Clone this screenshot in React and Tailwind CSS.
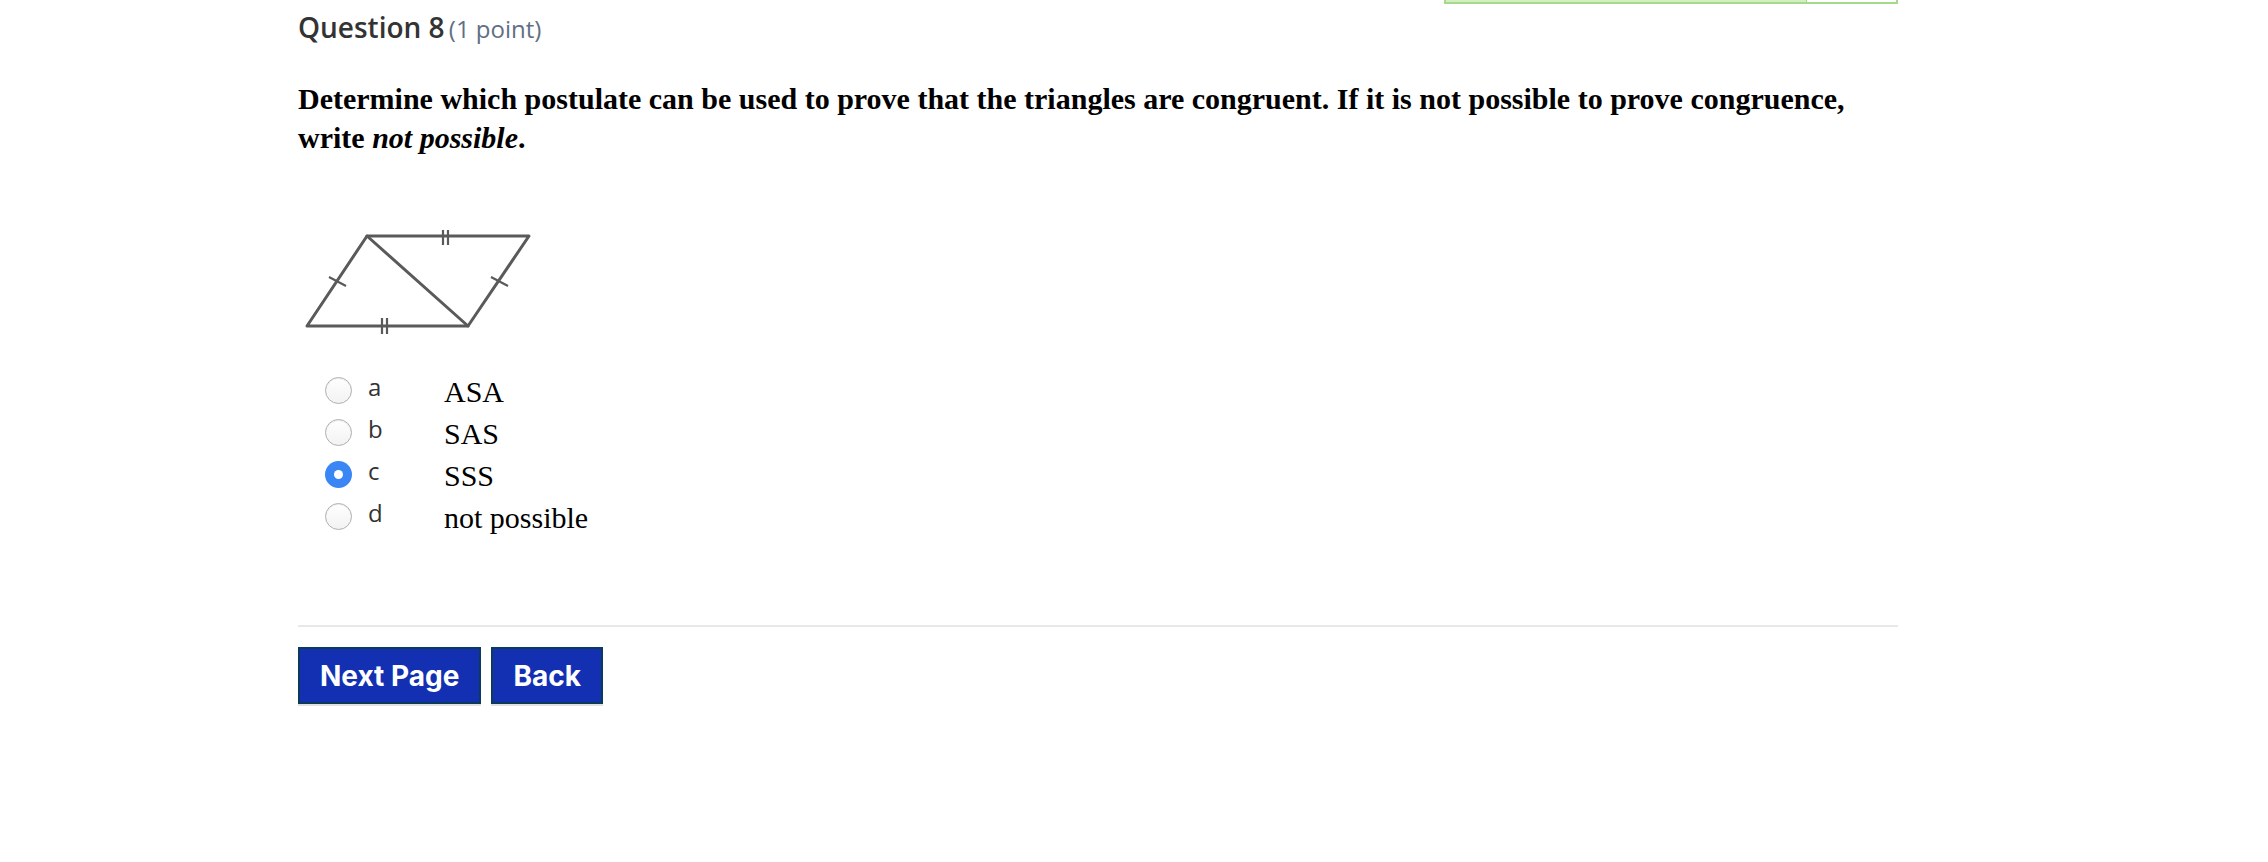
import React from "react";

function Radio({ checked }) {
  if (checked) {
    return (
      <span className="w-[27px] h-[27px] rounded-full bg-[#3a86f5] flex items-center justify-center">
        <span className="w-[9px] h-[9px] rounded-full bg-white" />
      </span>
    );
  }
  return (
    <span className="w-[27px] h-[27px] rounded-full border border-[#b0b0b0] bg-gradient-to-b from-white to-[#f2f2f2] shadow-[inset_0_1px_1px_rgba(0,0,0,0.08)]" />
  );
}

function Figure() {
  return (
    <svg width="240" height="104" viewBox="0 0 240 104" className="block">
      <g stroke="#5a5a5a" strokeWidth="3" fill="none" strokeLinejoin="round" strokeLinecap="round">
        <path d="M69 6 L231 6 L170 96 L9 96 Z" />
        <path d="M69 6 L170 96" />
      </g>
      <g stroke="#5a5a5a" strokeWidth="2.2" fill="none">
        <path d="M145 -3 L145 15 M150 -3 L150 15" />
        <path d="M84 88 L84 104 M89 88 L89 104" />
        <path d="M31 47 L48 56" />
        <path d="M193 47 L210 56" />
      </g>
    </svg>
  );
}

const options = [
  { k: "a", t: "ASA" },
  { k: "b", t: "SAS" },
  { k: "c", t: "SSS", checked: true },
  { k: "d", t: "not possible" },
];

export default function App() {
  return (
    <div className="w-[2268px] h-[862px] bg-white overflow-hidden">
      <div className="ml-[298px] w-[1600px]">
        <div className="flex justify-end">
          <div className="w-[454px] h-[4px] flex border-2 border-t-0 border-[#a5da8e]">
            <div className="flex-1 bg-[#d3efc2] border-r border-[#a5da8e]" />
            <div className="w-[89px] bg-white" />
          </div>
        </div>
        <div className="mt-[4px] leading-[38px] text-[#333]" style={{ fontFamily: '"Open Sans", sans-serif' }}>
          <span className="text-[28px] font-semibold">Question 8</span>{" "}
          <span className="text-[24px] text-[#5f7084]">(1 point)</span>
        </div>
        <p className="mt-[28px] text-[30px] leading-[39px] font-bold text-black" style={{ fontFamily: '"Liberation Serif", serif' }}>
          Determine which postulate can be used to prove that the triangles are congruent. If it is not possible to prove congruence, write <em>not possible</em>.
        </p>
        <div className="mt-[73px]">
          <Figure />
        </div>
        <div className="mt-[35px] flex flex-col">
          {options.map((o) => (
            <div key={o.k} className="h-[42px] flex items-center">
              <div className="w-[70px] flex items-center pl-[27px]">
                <Radio checked={o.checked} />
              </div>
              <span className="w-[76px] text-[24px] text-[#333] -mt-[6px]" style={{ fontFamily: '"Open Sans", sans-serif' }}>
                {o.k}
              </span>
              <span className="text-[30px] text-black leading-[42px] mt-[4px]" style={{ fontFamily: '"Liberation Serif", serif' }}>
                {o.t}
              </span>
            </div>
          ))}
        </div>
        <div className="mt-[88px] h-[2px] bg-[#e8e8e8]" />
        <div className="mt-[20px] flex gap-[10px]" style={{ fontFamily: 'Inter, sans-serif' }}>
          <button className="h-[57px] px-[20px] bg-[#1330b3] border-2 border-[#0b3a5a] text-white text-[28px] font-bold shadow-[0_2px_0_#e2e2e2]">
            Next Page
          </button>
          <button className="h-[57px] px-[20px] bg-[#1330b3] border-2 border-[#0b3a5a] text-white text-[28px] font-bold shadow-[0_2px_0_#e2e2e2]">
            Back
          </button>
        </div>
      </div>
    </div>
  );
}
